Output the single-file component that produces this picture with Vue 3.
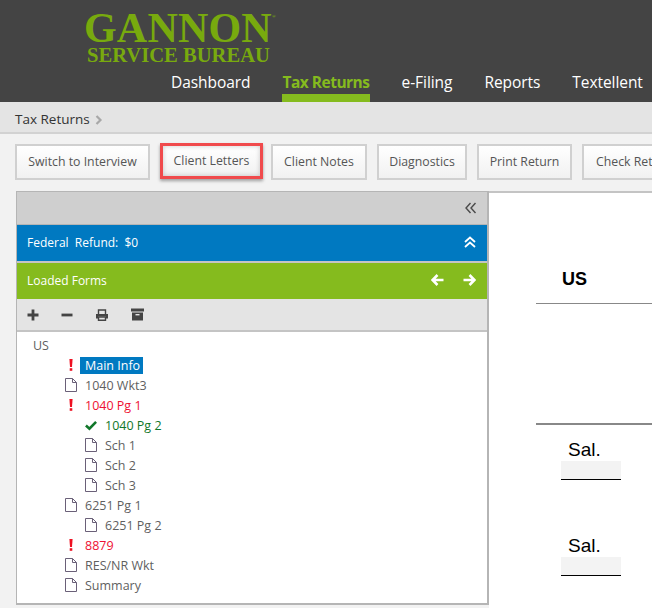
<script setup>
const navItems = [
  { label: 'Dashboard' },
  { label: 'Tax Returns', active: true },
  { label: 'e-Filing' },
  { label: 'Reports' },
  { label: 'Textellent' }
]
const buttons = [
  { label: 'Switch to Interview', cls: 'b1' },
  { label: 'Client Letters', cls: 'hl' },
  { label: 'Client Notes', cls: 'b3' },
  { label: 'Diagnostics', cls: 'b4' },
  { label: 'Print Return', cls: 'b5' },
  { label: 'Check Return', cls: 'b6' }
]
const rows = [
  { label: 'Main Info', icon: 'warn', level: 0, selected: true },
  { label: '1040 Wkt3', icon: 'file', level: 0 },
  { label: '1040 Pg 1', icon: 'warn', level: 0, tone: 'red' },
  { label: '1040 Pg 2', icon: 'check', level: 1, tone: 'ok' },
  { label: 'Sch 1', icon: 'file', level: 1 },
  { label: 'Sch 2', icon: 'file', level: 1 },
  { label: 'Sch 3', icon: 'file', level: 1 },
  { label: '6251 Pg 1', icon: 'file', level: 0 },
  { label: '6251 Pg 2', icon: 'file', level: 1 },
  { label: '8879', icon: 'warn', level: 0, tone: 'red' },
  { label: 'RES/NR Wkt', icon: 'file', level: 0 },
  { label: 'Summary', icon: 'file', level: 0 }
]
</script>

<template>
  <div class="page">
    <header class="top">
      <div class="logo">
        <div class="logo-main">GANNON<span class="reg">®</span></div>
        <div class="logo-sub">SERVICE BUREAU</div>
      </div>
      <nav class="nav">
        <a v-for="n in navItems" :key="n.label" class="nav-item" :class="{ active: n.active }">{{ n.label }}</a>
      </nav>
    </header>

    <div class="crumbs">
      <span>Tax Returns</span>
      <svg class="crumb-arrow" width="8" height="10" viewBox="0 0 8 10"><path d="M1.5 1 L5.5 5 L1.5 9" fill="none" stroke="#a8a8a8" stroke-width="2.2" /></svg>
    </div>

    <div class="actions">
      <button v-for="b in buttons" :key="b.label" class="btn" :class="b.cls">{{ b.label }}</button>
    </div>

    <main class="work">
      <section class="panel">
        <div class="panel-top">
          <svg width="12" height="12" viewBox="0 0 12 12"><path d="M5.5 1 L1 6 L5.5 11 M10.5 1 L6 6 L10.5 11" fill="none" stroke="#4a4a4a" stroke-width="1.4" /></svg>
        </div>
        <div class="bar blue">
          <span class="refund">Federal&nbsp; Refund:&nbsp; $0</span>
          <svg width="12" height="12" viewBox="0 0 12 12"><path d="M1 6 L6 1.5 L11 6 M1 11 L6 6.5 L11 11" fill="none" stroke="#fff" stroke-width="1.8" /></svg>
        </div>
        <div class="bar green">
          <span>Loaded Forms</span>
          <div class="arrows">
            <svg width="13" height="12" viewBox="0 0 13 12"><path d="M6.5 1 L1.5 6 L6.5 11 M2 6 H12.5" fill="none" stroke="#fff" stroke-width="2.6" /></svg>
            <svg width="13" height="12" viewBox="0 0 13 12"><path d="M6.5 1 L11.5 6 L6.5 11 M11 6 H0.5" fill="none" stroke="#fff" stroke-width="2.6" /></svg>
          </div>
        </div>
        <div class="tools">
          <svg width="12" height="12" viewBox="0 0 12 12"><path d="M6 0.5 V11.5 M0.5 6 H11.5" stroke="#444" stroke-width="2.8" /></svg>
          <svg width="12" height="12" viewBox="0 0 12 12"><path d="M0.5 6 H11.5" stroke="#444" stroke-width="2.8" /></svg>
          <svg width="14" height="12" viewBox="0 0 14 12"><path d="M3.5 5 V1 H10.5 V5 M3.5 8 H10.5 V11.3 H3.5 Z" fill="none" stroke="#444" stroke-width="1.4" /><path d="M1 5 H13 V9.5 H11 V7.5 H3 V9.5 H1 Z" fill="#444" /></svg>
          <svg width="13" height="13" viewBox="0 0 13 13"><rect x="0" y="0.5" width="13" height="3" fill="#444" /><path d="M1 4.5 H12 V12.5 H1 Z" fill="#444" /><rect x="4.5" y="6" width="4" height="1.4" fill="#e4e4e4" /></svg>
        </div>
        <div class="tree">
          <div class="root">US</div>
          <div v-for="r in rows" :key="r.label" class="row" :class="['lvl' + r.level, r.tone]">
            <span class="ico">
              <svg v-if="r.icon === 'warn'" width="4" height="12" viewBox="0 0 4 12"><path d="M0.4 0 H3.6 L3 8 H1 Z" fill="#ee1122" /><rect x="0.7" y="9.2" width="2.6" height="2.6" fill="#ee1122" /></svg>
              <svg v-else-if="r.icon === 'file'" width="12" height="14" viewBox="0 0 12 14"><path d="M0.5 0.5 H7.5 L11.5 4.5 V13.5 H0.5 Z M7.5 0.5 V4.5 H11.5" fill="none" stroke="#6a6078" stroke-width="1" /></svg>
              <svg v-else width="13" height="11" viewBox="0 0 13 11"><path d="M1 5.5 L4.8 9 L12 1.5" fill="none" stroke="#11772a" stroke-width="2.8" /></svg>
            </span>
            <span class="txt" :class="{ sel: r.selected }">{{ r.label }}</span>
          </div>
        </div>
      </section>

      <section class="doc">
        <div class="doc-head">US</div>
        <div class="doc-gap"></div>
        <div class="doc-field first">
          <div class="sal">Sal.</div>
          <div class="inp"></div>
        </div>
        <div class="doc-field second">
          <div class="sal">Sal.</div>
          <div class="inp"></div>
        </div>
      </section>
    </main>
  </div>
</template>

<style scoped>
.page {
  width: 652px;
  height: 608px;
  overflow: hidden;
  background: #f2f2f2;
  font-family: "Open Sans", "Noto Sans", sans-serif;
  color: #444;
  display: flex;
  flex-direction: column;
}
.top {
  height: 102px;
  flex: none;
  background: #444444;
  display: flex;
  flex-direction: column;
}
.logo {
  margin: 9px 0 0 84px;
  height: 61px;
  width: 195px;
  font-family: "Liberation Serif", serif;
  font-weight: 700;
  color: #78aa0e;
  white-space: nowrap;
}
.logo-main {
  font-size: 42px;
  line-height: 38px;
  letter-spacing: 0.2px;
  display: flex;
  align-items: flex-start;
}
.reg {
  font-size: 5px;
  line-height: 10px;
  margin-top: 3px;
}
.logo-sub {
  font-size: 20.6px;
  line-height: 17px;
  margin-left: 3px;
}
.nav {
  display: flex;
  gap: 32px;
  margin-left: 171px;
  white-space: nowrap;
}
.nav-item {
  height: 32px;
  line-height: 24px;
  font-size: 15.5px;
  color: #fff;
  letter-spacing: -0.06px;
}
.nav-item.active {
  color: #85bb1e;
  font-weight: 700;
  border-bottom: 8px solid #85bb1e;
  height: 24px;
  letter-spacing: -0.5px;
}
.crumbs {
  height: 32px;
  flex: none;
  box-sizing: border-box;
  background: #e4e4e4;
  border-bottom: 2px solid #d2d2d2;
  padding: 3px 0 0 15px;
  display: flex;
  align-items: center;
  gap: 5px;
  font-size: 13.5px;
  color: #333;
}
.crumb-arrow { margin-top: 2px; }
.actions {
  height: 57px;
  flex: none;
  display: flex;
  gap: 10px;
  padding: 10px 0 0 15px;
  box-sizing: border-box;
  white-space: nowrap;
}
.btn {
  height: 36px;
  flex: none;
  box-sizing: border-box;
  border: 2px solid #d0d0d0;
  background: linear-gradient(#ffffff, #f1f1f1);
  font: 12.3px "Open Sans", "Noto Sans", sans-serif;
  color: #555;
  padding: 0 0 2px;
}
.b1 { width: 135px; }
.hl {
  width: 103px;
  margin-top: -1px;
  border: 3px solid #f04a4c;
  box-shadow: inset 0 0 5px rgba(0, 0, 0, 0.2), 0 2px 3px rgba(0, 0, 0, 0.35);
}
.b3 { width: 96px; margin-left: -2px; }
.b4 { width: 90px; }
.b5 { width: 95px; }
.b6 { width: 110px; text-align: left; padding-left: 12px; }
.work {
  flex: 1;
  display: flex;
  align-items: flex-start;
  padding-left: 16px;
  min-height: 0;
}
.panel {
  width: 473px;
  height: 414px;
  flex: none;
  box-sizing: border-box;
  border: 1px solid #b5b5b5;
  border-right-width: 2px;
  border-bottom-width: 2px;
  background: #fff;
  display: flex;
  flex-direction: column;
}
.panel-top {
  height: 33px;
  flex: none;
  background: #cfcfcf;
  border-bottom: 1px solid #b5b5b5;
  box-sizing: border-box;
  display: flex;
  align-items: center;
  justify-content: flex-end;
  padding-right: 10px;
}
.bar {
  flex: none;
  display: flex;
  align-items: center;
  justify-content: space-between;
  color: #fff;
  font-size: 12px;
  padding: 0 11px 2px 10px;
  box-sizing: border-box;
}
.blue {
  height: 36px;
  background: #0079c1;
}
.green {
  height: 38px;
  background: #85bb1e;
  border-top: 2px solid #c4c4c4;
}
.arrows {
  display: flex;
  gap: 19px;
}
.tools {
  height: 33px;
  flex: none;
  box-sizing: border-box;
  background: #e4e4e4;
  border-bottom: 2px solid #c4c4c4;
  display: flex;
  align-items: center;
  gap: 22px;
  padding-left: 10px;
}
.tree {
  padding: 3px 0 0 16px;
  font-size: 12.5px;
  color: #5f5f5f;
}
.root,
.row {
  height: 20px;
  line-height: 20px;
  white-space: nowrap;
}
.root {
  line-height: 22px;
}
.row {
  display: flex;
  align-items: center;
}
.lvl0 { padding-left: 32px; }
.lvl1 { padding-left: 52px; }
.ico {
  width: 12px;
  margin-right: 8px;
  display: flex;
  justify-content: center;
  flex: none;
}
.txt {
  display: inline-block;
  line-height: 17px;
}
.sel {
  background: #0079c1;
  color: #fff;
  padding: 0 3px 0 5px;
  margin-left: -5px;
}
.red .txt { color: #ee1133; }
.ok .txt { color: #11772a; }
.doc {
  flex: 1;
  height: 417px;
  background: #fff;
  border-top: 2px solid #c4c4c4;
  padding-left: 47px;
  box-sizing: border-box;
  font-family: "Liberation Sans", Arial, sans-serif;
  color: #000;
  overflow: hidden;
}
.doc-head {
  margin-top: 75px;
  height: 36px;
  line-height: 22px;
  padding-left: 26px;
  font-size: 18px;
  font-weight: 700;
  box-sizing: border-box;
  border-bottom: 1px solid #888;
}
.doc-gap {
  height: 119px;
  border-bottom: 2px solid #888;
}
.doc-field {
  padding-left: 25px;
}
.first { margin-top: 14px; }
.second { margin-top: 55px; }
.sal {
  font-size: 19px;
  line-height: 22px;
  padding-left: 7px;
}
.inp {
  width: 60px;
  height: 18px;
  background: #f3f3f3;
  border-bottom: 1px solid #000;
}
</style>

<style>
html, body { margin: 0; padding: 0; overflow: hidden; }
</style>
